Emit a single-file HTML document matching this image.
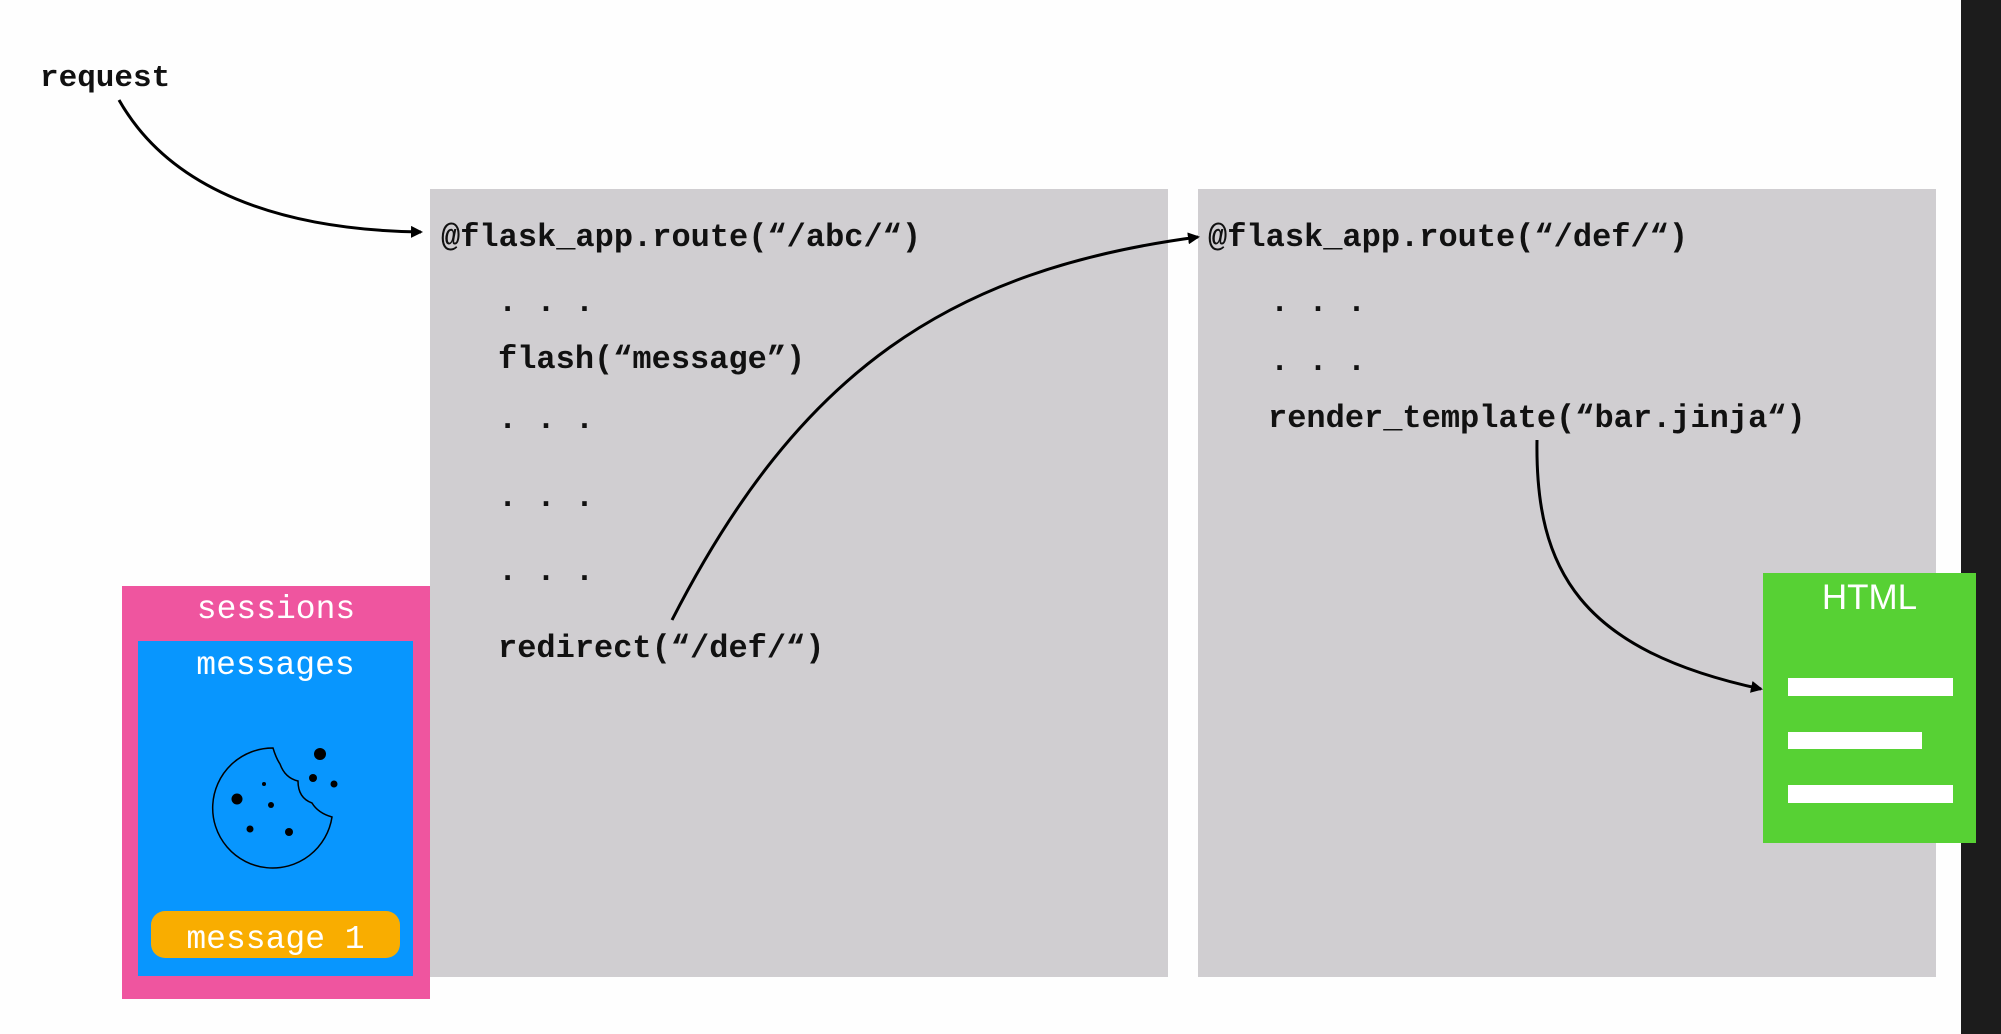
<!DOCTYPE html>
<html><head><meta charset="utf-8"><style>
html,body{margin:0;padding:0;width:2001px;height:1034px;overflow:hidden;background:#fefefe;position:relative}
.a{position:absolute}
.m{font-family:"Liberation Mono",monospace;font-weight:bold;font-size:32px;color:#111;white-space:pre;line-height:1}
.w{font-family:"Liberation Mono",monospace;color:#fff;font-size:33px;white-space:pre;line-height:1;text-align:center}
</style></head><body>
<div class="a" style="left:1961px;top:0;width:40px;height:1034px;background:#1c1c1c"></div>
<div class="a" style="left:430px;top:189px;width:738px;height:788px;background:#d0ced1"></div>
<div class="a" style="left:1198px;top:189px;width:738px;height:788px;background:#d0ced1"></div>
<div class="a" style="left:122px;top:586px;width:308px;height:413px;background:#ef559f"></div>
<div class="a" style="left:138px;top:641px;width:275px;height:335px;background:#0896fe"></div>
<div class="a" style="left:151px;top:911px;width:249px;height:47px;background:#f9ad00;border-radius:14px"></div>
<div class="a" style="left:1763px;top:573px;width:213px;height:270px;background:#57d134"></div>
<div class="a" style="left:1788px;top:678px;width:165px;height:18px;background:#fff"></div>
<div class="a" style="left:1788px;top:732px;width:134px;height:17px;background:#fff"></div>
<div class="a" style="left:1788px;top:785px;width:165px;height:18px;background:#fff"></div>
<div class="a" style="left:1763px;top:578px;width:213px;text-align:center;font-family:'Liberation Sans',sans-serif;color:#fff;font-size:35px">HTML</div>

<div class="a m" style="left:40px;top:63px;font-size:31px">request</div>
<div class="a m" style="left:441px;top:222px">@flask_app.route(“/abc/“)</div>
<div class="a m" style="left:498px;top:287px">. . .</div>
<div class="a m" style="left:498px;top:344px">flash(“message”)</div>
<div class="a m" style="left:498px;top:404px">. . .</div>
<div class="a m" style="left:498px;top:482px">. . .</div>
<div class="a m" style="left:498px;top:556px">. . .</div>
<div class="a m" style="left:498px;top:633px">redirect(“/def/“)</div>
<div class="a m" style="left:1208px;top:222px">@flask_app.route(“/def/“)</div>
<div class="a m" style="left:1270px;top:287px">. . .</div>
<div class="a m" style="left:1270px;top:346px">. . .</div>
<div class="a m" style="left:1268px;top:403px">render_template(“bar.jinja“)</div>

<div class="a w" style="left:122px;top:593px;width:308px">sessions</div>
<div class="a w" style="left:138px;top:649px;width:275px">messages</div>
<div class="a w" style="left:151px;top:923px;width:249px">message 1</div>

<svg class="a" style="left:0;top:0" width="2001" height="1034" viewBox="0 0 2001 1034">
<defs><marker id="ar" markerWidth="12" markerHeight="12" refX="10" refY="6" orient="auto" markerUnits="userSpaceOnUse"><path d="M0,0 L12,6 L0,12 z" fill="#000"/></marker></defs>
<g fill="none" stroke="#000" stroke-width="3">
<path d="M119,100 C170,190 280,230 421,232" marker-end="url(#ar)"/>
<path d="M672,620 C800,370 950,270 1198,237" marker-end="url(#ar)"/>
<path d="M1537,440 C1535,570 1580,650 1761,689" marker-end="url(#ar)"/>
</g>
<g transform="translate(0,23)">
<path d="M273,725 A60,60 0 1 0 332,794 Q318,790 312,780 Q298,775 298,758 Q285,755 280,741 Q276,735 273,725 z" fill="none" stroke="#000" stroke-width="1.5"/>
<circle cx="320" cy="731" r="6" fill="#000"/>
<circle cx="313" cy="755" r="4" fill="#000"/>
<circle cx="334" cy="761" r="3.5" fill="#000"/>
<circle cx="237" cy="776" r="5.5" fill="#000"/>
<circle cx="264" cy="761" r="2" fill="#000"/>
<circle cx="271" cy="782" r="3" fill="#000"/>
<circle cx="250" cy="806" r="3.5" fill="#000"/>
<circle cx="289" cy="809" r="4" fill="#000"/>
</g>
</svg>
</body></html>
